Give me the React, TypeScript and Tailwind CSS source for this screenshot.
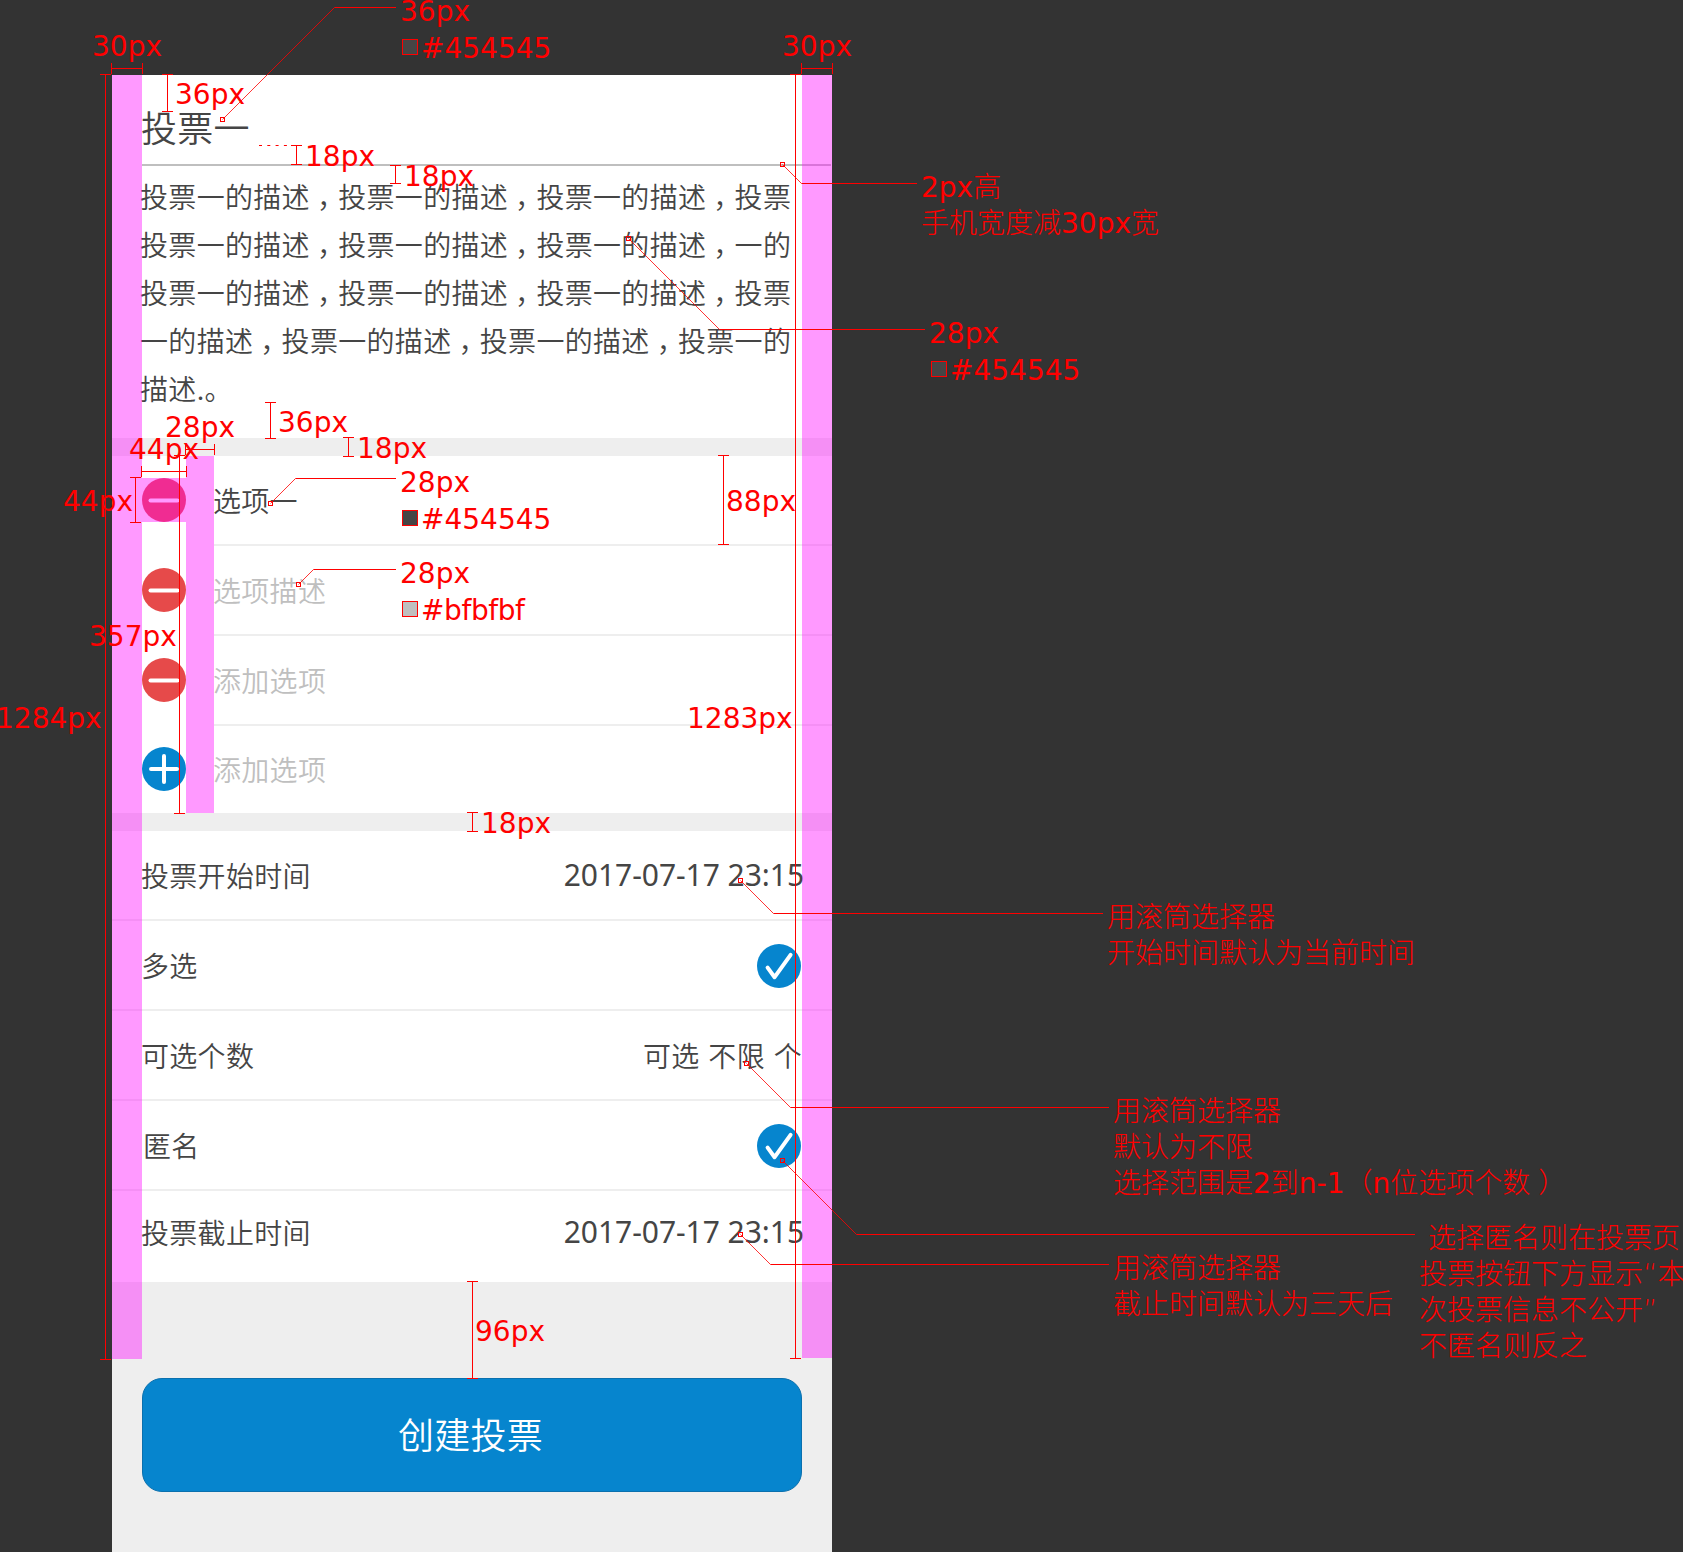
import type { ReactNode } from "react";

type Point = [number, number];

const MINUS = "M8.5 22.5H35.5";
const PLUS = "M9 22H35M22 9V35";
const CHECK = "M10.6 23.6L17.6 33.2L33.6 10.8";

function RoundIcon({ color, path }: { color: string; path: string }) {
  return (
    <svg className="block size-11 shrink-0" viewBox="0 0 44 44" fill="none">
      <circle cx="22" cy="22" r="22" fill={color} />
      <path d={path} stroke="#fff" strokeWidth="4" strokeLinecap="round" strokeLinejoin="round" />
    </svg>
  );
}

const description = [
  "投票一的描述，投票一的描述，投票一的描述，投票",
  "投票一的描述，投票一的描述，投票一的描述，一的",
  "投票一的描述，投票一的描述，投票一的描述，投票",
  "一的描述，投票一的描述，投票一的描述，投票一的",
  "描述.。",
];

function DescriptionLine({ text }: { text: string }) {
  return (
    <p className="whitespace-nowrap">
      {text.split("").map((ch, i) =>
        ch === "，" ? (
          <span key={i} className="inline-block translate-x-[7px]">
            {ch}
          </span>
        ) : (
          ch
        ),
      )}
    </p>
  );
}

const options = [
  { label: "选项一", color: "#e64a4a", path: MINUS, text: "text-[#454545]" },
  { label: "选项描述", color: "#e64a4a", path: MINUS, text: "text-[#bfbfbf]" },
  { label: "添加选项", color: "#e64a4a", path: MINUS, text: "text-[#bfbfbf]" },
  { label: "添加选项", color: "#0685ce", path: PLUS, text: "text-[#bfbfbf]" },
];

function SettingRow({
  label,
  className = "border-b-2 pl-[29px]",
  children,
}: {
  label: string;
  className?: string;
  children: ReactNode;
}) {
  return (
    <div className={`flex h-[90px] items-center justify-between border-[#eeeeee] pr-[30px] ${className}`}>
      <span>{label}</span>
      {children}
    </div>
  );
}

function DateValue() {
  return (
    <span className="-mr-[2px] pb-px font-['Noto_Sans'] text-[30px] leading-[40px] font-normal tracking-[-0.05px] whitespace-nowrap">
      2017-07-17 23:15
    </span>
  );
}

function CheckMark() {
  return (
    <span className="mt-[2px] mr-px">
      <RoundIcon color="#0685ce" path={CHECK} />
    </span>
  );
}

function Phone() {
  return (
    <main className="flex h-[1477px] w-[720px] flex-col bg-[#eeeeee] text-[28px] leading-[40px] tracking-[0.3px] text-[#454545]">
      <section className="h-[363px] bg-white pl-[30px]">
        <div className="mr-px flex h-[91px] items-end border-b-2 border-[#bfbfbf]">
          <h1 className="-ml-px pb-[12px] text-[36px] leading-[52px]">投票一</h1>
        </div>
        <div className="-ml-[2px] pt-[6px] leading-[48px]">
          {description.map((line, i) => (
            <DescriptionLine key={i} text={line} />
          ))}
        </div>
      </section>

      <section className="mt-[18px] h-[357px] overflow-hidden bg-white pl-[30px]">
        {options.map((o, i) => (
          <div key={i} className="flex h-[90px] gap-7 last:h-[87px]">
            <div className={i === 3 ? "pt-[21px]" : "pt-[22px]"}>
              <RoundIcon color={o.color} path={o.path} />
            </div>
            <div
              className={`flex flex-1 items-center ${i === 3 ? "pb-[2px]" : "border-b-2 border-[#eeeeee]"} ${o.text}`}
            >
              <span className="-ml-px">{o.label}</span>
            </div>
          </div>
        ))}
      </section>

      <section className="mt-[18px] h-[451px] bg-white">
        <SettingRow label="投票开始时间">
          <DateValue />
        </SettingRow>
        <SettingRow label="多选">
          <CheckMark />
        </SettingRow>
        <SettingRow label="可选个数">
          <span className="[word-spacing:2.2px]">可选 不限 个</span>
        </SettingRow>
        <SettingRow label="匿名" className="border-b-2 pl-[31px]">
          <CheckMark />
        </SettingRow>
        <SettingRow label="投票截止时间" className="pb-[8px] pl-[29px]">
          <DateValue />
        </SettingRow>
      </section>

      <button className="mx-[30px] mt-24 h-[114px] rounded-[20px] border border-[#0a70ae] bg-[#0685ce] pr-[3px] pb-[4px] text-[36px] leading-[52px] text-white">
        创建投票
      </button>
    </main>
  );
}

/* Distance markers: [x1, y1, x2, y2] with end ticks */
const measures: [number, number, number, number][] = [
  [111.5, 68.5, 142.5, 68.5],
  [801.5, 68.5, 832.5, 68.5],
  [105.5, 74.5, 105.5, 1359.5],
  [795.5, 74.5, 795.5, 1358.5],
  [167.5, 74.5, 167.5, 111.5],
  [296.5, 145.5, 296.5, 164.5],
  [395.5, 165.5, 395.5, 183.5],
  [270.5, 402.5, 270.5, 438.5],
  [348.5, 437.5, 348.5, 456.5],
  [185.5, 449.5, 214.5, 449.5],
  [141.5, 471.5, 186.5, 471.5],
  [135.5, 477.5, 135.5, 522.5],
  [723.5, 455.5, 723.5, 544.5],
  [179.5, 455.5, 179.5, 813.5],
  [472.5, 812.5, 472.5, 831.5],
  [472.5, 1281.5, 472.5, 1378.5],
];

/* Callout leaders: anchor, elbow, end x */
const leaders: [Point, Point, number][] = [
  [[222.5, 119.5], [334.5, 7.5], 396],
  [[782.5, 164.5], [801.5, 183.5], 917],
  [[628.5, 238.5], [719.5, 329.5], 925],
  [[270.5, 503.5], [295.5, 478.5], 396],
  [[298.5, 584.5], [313.5, 569.5], 396],
  [[740.5, 880.5], [773.5, 913.5], 1103],
  [[746.5, 1063.5], [790.5, 1107.5], 1109],
  [[782.5, 1160.5], [856.5, 1234.5], 1415],
  [[740.5, 1234.5], [770.5, 1264.5], 1109],
];

/* Labels: left, baseline, lines */
const notes: [number, number, string[]][] = [
  [400, 21, ["36px"]],
  [421, 58, ["#454545"]],
  [92, 56, ["30px"]],
  [782, 56, ["30px"]],
  [175, 104, ["36px"]],
  [305, 166, ["18px"]],
  [404, 186, ["18px"]],
  [921, 197, ["2px高", "手机宽度减30px宽"]],
  [929, 343, ["28px"]],
  [950, 380, ["#454545"]],
  [165, 437, ["28px"]],
  [129, 459, ["44px"]],
  [278, 432, ["36px"]],
  [357, 458, ["18px"]],
  [63, 511, ["44px"]],
  [400, 492, ["28px"]],
  [421, 529, ["#454545"]],
  [400, 583, ["28px"]],
  [421, 620, ["#bfbfbf"]],
  [726, 511, ["88px"]],
  [687, 728, ["1283px"]],
  [89, 646, ["357px"]],
  [-4, 728, ["1284px"]],
  [481, 833, ["18px"]],
  [475, 1341, ["96px"]],
  [1107, 927, ["用滚筒选择器", "开始时间默认为当前时间"]],
  [1113, 1121, ["用滚筒选择器", "默认为不限", "选择范围是2到n-1（n位选项个数）"]],
  [1113, 1278, ["用滚筒选择器", "截止时间默认为三天后"]],
  [1419, 1248, [" 选择匿名则在投票页", "投票按钮下方显示“本", "次投票信息不公开”", "不匿名则反之"]],
];

const swatches: [number, number, string][] = [
  [402, 39, "#454545"],
  [931, 361, "#454545"],
  [402, 510, "#454545"],
  [402, 601, "#bfbfbf"],
];

/* Latin runs use a regular weight, Chinese runs a light one */
function runClass(run: string) {
  if (/^#b/.test(run)) return "font-normal tracking-[-0.4px]";
  if (/^[\x21-\x7e]/.test(run)) return "font-normal";
  if (run === "）") return "inline-block translate-x-[8px] font-light";
  return "font-light";
}

function NoteLine({ text }: { text: string }) {
  const runs = text.match(/[\x21-\x7e]+|）|[^\x21-\x7e）]+/g) ?? [];
  return (
    <div>
      {runs.map((run, i) => (
        <span key={i} className={runClass(run)}>
          {run}
        </span>
      ))}
    </div>
  );
}

function Annotations() {
  return (
    <div className="pointer-events-none absolute inset-0 overflow-hidden">
      <div className="absolute top-[75px] left-[112px] h-[1284px] w-[30px] bg-[#ff00ff]/40" />
      <div className="absolute top-[75px] left-[802px] h-[1283px] w-[30px] bg-[#ff00ff]/40" />
      <div className="absolute top-[478px] left-[142px] h-[44px] w-[44px] bg-[#ff00ff]/40" />
      <div className="absolute top-[456px] left-[186px] h-[357px] w-[28px] bg-[#ff00ff]/40" />

      <svg className="absolute inset-0" width="1683" height="1552" fill="none" stroke="#ff0000">
        {measures.map(([x1, y1, x2, y2], i) => {
          const d =
            x1 === x2
              ? `M${x1} ${y1}V${y2}M${x1 - 5.5} ${y1}h11M${x1 - 5.5} ${y2}h11`
              : `M${x1} ${y1}H${x2}M${x1} ${y1 - 5.5}v11M${x2} ${y1 - 5.5}v11`;
          return <path key={i} d={d} />;
        })}
        <path d="M259 145.5H291" strokeDasharray="3 5.3" />
        {leaders.map(([[ax, ay], [ex, ey], end], i) => (
          <g key={i}>
            <path d={`M${ax} ${ay}L${ex} ${ey}`} strokeWidth="0.8" />
            <path d={`M${ex} ${ey}H${end}`} />
            <rect x={ax - 2} y={ay - 2} width="4" height="4" />
          </g>
        ))}
        {swatches.map(([x, y, fill], i) => (
          <rect key={i} x={x + 0.5} y={y + 0.5} width="15" height="15" fill={fill} />
        ))}
      </svg>

      {notes.map(([x, baseline, lines], i) => (
        <div
          key={i}
          className="absolute font-['DejaVu_Sans','Noto_Sans_CJK_SC',sans-serif] text-[28px] leading-[36px] whitespace-pre text-[#ff0000]"
          style={{ left: x, top: baseline - 27 }}
        >
          {lines.map((line, j) => (
            <NoteLine key={j} text={line} />
          ))}
        </div>
      ))}
    </div>
  );
}

export default function App() {
  return (
    <div className="relative h-[1552px] w-[1683px] overflow-hidden bg-[#333333] pt-[75px] pl-[112px] font-['Noto_Sans_CJK_SC',sans-serif] font-[350]">
      <Phone />
      <Annotations />
    </div>
  );
}
